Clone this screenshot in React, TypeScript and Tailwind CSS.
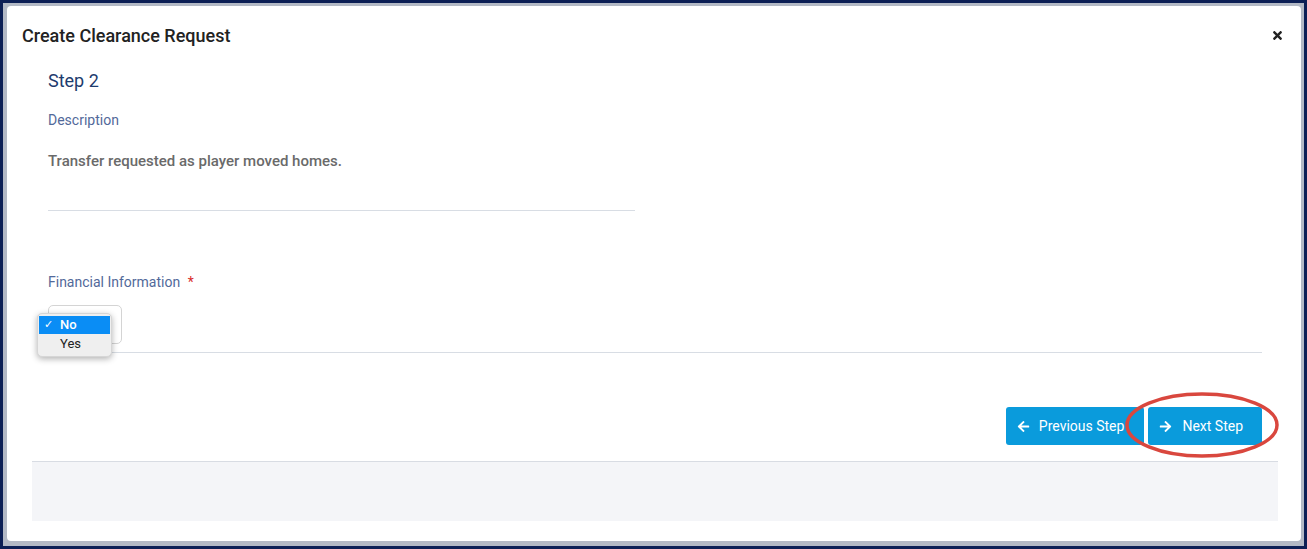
import React from 'react';
import { FaArrowLeft, FaArrowRight, FaTimes } from 'react-icons/fa';

export default function App() {
  return (
    <div className="w-[1307px] h-[549px] bg-[#0c1f55] p-[3px] font-['Roboto',sans-serif]">
      <div className="h-full bg-[#b3b9c5] pl-[4px] pt-[3px] pr-[3px] pb-[5px]">
        <div className="relative h-full bg-white rounded-[4px] overflow-hidden">
          {/* Header */}
          <div className="h-[58px] flex items-center justify-between pl-[15px] pr-[17px]">
            <h2 className="text-[18px] font-medium text-[#222]">Create Clearance Request</h2>
            <FaTimes className="w-[13px] h-[13px] text-[#222]" />
          </div>

          {/* Body */}
          <div className="pl-[25px] pr-[23px]">
            <div className="px-[16px]">
              <h3 className="mt-[5px] text-[18px] leading-[24px] text-[#1d3b6e]">Step 2</h3>
              <p className="mt-[17px] text-[14px] leading-[20px] text-[#52699a]">Description</p>
              <div className="w-[587px] border-b border-[#d8dde4] pt-[21px] pb-[39px]">
                <p className="text-[15px] leading-[20px] font-medium text-[#6a6a6a]">
                  Transfer requested as player moved homes.
                </p>
              </div>

              <p className="mt-[61px] text-[14px] leading-[20px] text-[#52699a]">
                Financial Information <span className="ml-[4px] text-[#d92b2b]">*</span>
              </p>
              <div className="border-b border-[#d8dde4] pt-[13px] pb-[8px]">
                <div className="w-[74px] h-[39px] rounded-[5px] border border-[#d4d4d4] bg-white" />
              </div>

              <div className="flex justify-end pt-[54px]">
                <button className="h-[38px] flex items-center gap-[9px] pl-[11px] pr-[20px] rounded-[3px] bg-[#0a9bdc] text-white text-[14px]">
                  <FaArrowLeft className="w-[13px] h-[13px]" />
                  Previous Step
                </button>
                <div className="relative ml-[4px]">
                  <button className="h-[38px] flex items-center gap-[10px] pl-[11px] pr-[19px] rounded-[3px] bg-[#0a9bdc] text-white text-[14px]">
                    <FaArrowRight className="w-[13px] h-[13px]" />
                    Next Step
                  </button>
                  <svg className="absolute left-[-24px] top-[-17px] pointer-events-none" width="160" height="70" viewBox="0 0 160 70">
                    <ellipse cx="78" cy="35" rx="75" ry="31" fill="none" stroke="#d9473e" strokeWidth="3.5" />
                  </svg>
                </div>
              </div>
            </div>

            <div className="mt-[16px] h-[60px] bg-[#f4f5f8] border-t border-[#d8dce3]" />
          </div>

          {/* Native select popup */}
          <div className="absolute left-[30px] top-[307px] w-[75px] py-[2px] rounded-[5px] bg-[#efefef] shadow-[0_2px_6px_rgba(0,0,0,0.3)] border border-[#d6d6d6] text-[13px] font-['Helvetica','Liberation Sans',sans-serif]">
            <div className="h-[18px] mx-[1px] flex items-center bg-[#0a8df5] text-white font-medium">
              <span className="w-[21px] pl-[5px] text-[11px]">✓</span>
              <span>No</span>
            </div>
            <div className="h-[20px] flex items-center pl-[22px] text-[#222]">Yes</div>
          </div>
        </div>
      </div>
    </div>
  );
}
